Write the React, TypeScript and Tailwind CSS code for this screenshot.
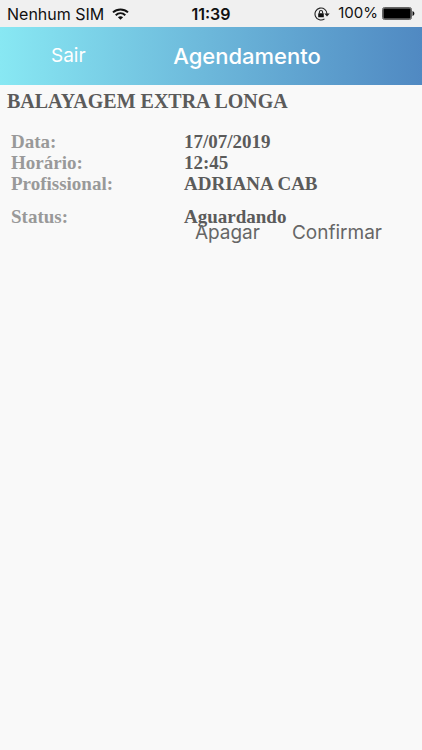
const details = [
  { label: "Data:", value: "17/07/2019" },
  { label: "Horário:", value: "12:45" },
  { label: "Profissional:", value: "ADRIANA CAB" },
  { label: "Status:", value: "Aguardando" },
];

function WifiIcon() {
  return (
    <svg viewBox="0 0 17 12" className="h-3 w-[17px]" fill="none" stroke="#111" strokeWidth="2" aria-hidden="true">
      <path d="M1 4.400C5.200 0.400 11.800 0.400 16 4.400" />
      <path d="M3.700 7.200C6.500 4.600 10.500 4.600 13.300 7.200" />
      <path d="M8.500 11.800L5.900 9.200C7.400 7.900 9.600 7.900 11.100 9.200Z" fill="#111" stroke="none" />
    </svg>
  );
}

function RotationLockIcon() {
  return (
    <svg viewBox="0 0 16 14" className="h-[14px] w-4" fill="none" stroke="#222" aria-hidden="true">
      <path d="M10.500 11.900A6 6 0 1 1 13 7" strokeWidth="1.100" />
      <path d="M10.300 6.400H15.700L13 9.600Z" fill="#222" stroke="none" />
      <rect x="4.200" y="6.200" width="5.600" height="4" rx="0.500" fill="#111" stroke="none" />
      <path d="M5.400 6.400V5.100A1.600 1.600 0 0 1 8.600 5.100V6.400" strokeWidth="1.100" />
    </svg>
  );
}

function BatteryIcon() {
  return (
    <svg viewBox="0 0 33 13" className="h-[13px] w-[33px]" aria-hidden="true">
      <rect x="0.500" y="0.500" width="29" height="12" rx="2" fill="#999" stroke="#666" />
      <rect x="1.500" y="1.500" width="27" height="10" rx="1" fill="#000" />
      <path d="M30.500 4C33 4.800 33 8.200 30.500 9Z" fill="#111" />
    </svg>
  );
}

export default function App() {
  return (
    <div className="min-h-screen bg-[#f9f9f9] font-['Inter',sans-serif]">
      {/* Status bar */}
      <div className="grid h-[27px] grid-cols-[1fr_auto_1fr] items-center bg-[#f0f0f0] px-[7px] text-base text-[#111]">
        <div className="flex items-center gap-2">
          <span className="whitespace-nowrap">Nenhum SIM</span>
          <WifiIcon />
        </div>
        <span className="font-semibold">11:39</span>
        <div className="flex items-center justify-end">
          <RotationLockIcon />
          <span className="ml-2 mr-1 text-[15px]">100%</span>
          <BatteryIcon />
        </div>
      </div>

      {/* Header */}
      <header className="grid h-[58px] grid-cols-[1fr_auto_1fr] items-center bg-linear-to-r from-[#88e8f3] via-[#6cb7da] to-[#5089c2] text-white">
        <button type="button" className="justify-self-start pl-[51px] text-[19px]">
          Sair
        </button>
        <h1 className="pl-[72px] text-[22px] font-medium">Agendamento</h1>
      </header>

      {/* Appointment */}
      <main>
        <h2 className="px-[7px] pt-0.5 font-['Liberation_Serif',serif] text-xl font-bold text-[#5b5b5b]">
          BALAYAGEM EXTRA LONGA
        </h2>
        <dl className="mt-4 px-[11px] font-['Liberation_Serif',serif] text-[19px] leading-[21px] font-bold">
          {details.map(({ label, value }) => (
            <div key={label} className="grid grid-cols-[173px_1fr] last:mt-3">
              <dt className="text-[#999]">{label}</dt>
              <dd className="text-[#5b5b5b]">{value}</dd>
            </div>
          ))}
        </dl>
        <div className="-mt-1 flex justify-end gap-8 pr-10 text-[19px] leading-5 text-[#666]">
          <button type="button">Apagar</button>
          <button type="button">Confirmar</button>
        </div>
      </main>
    </div>
  );
}
